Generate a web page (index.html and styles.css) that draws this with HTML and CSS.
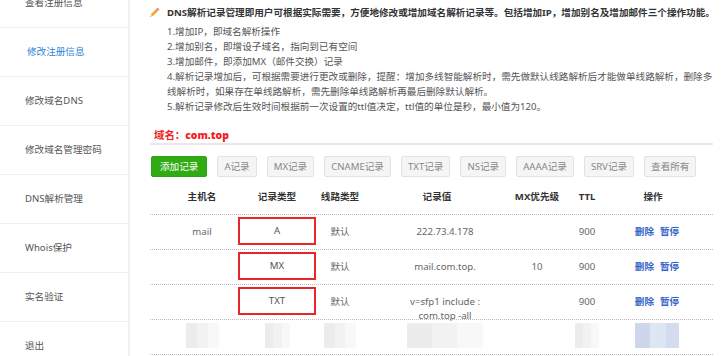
FILE: index.html
```html
<!DOCTYPE html>
<html lang="zh-CN">
<head>
    <meta charset="UTF-8">
    <meta name="viewport" content="width=device-width, initial-scale=1.0">
    <title>DNS解析管理</title>
    <link rel="stylesheet" href="styles.css">
</head>
<body>
    <div class="sidebar">
        <div class="side-item">查看注册信息</div>
        <div class="side-item active">修改注册信息</div>
        <div class="side-item">修改域名DNS</div>
        <div class="side-item">修改域名管理密码</div>
        <div class="side-item">DNS解析管理</div>
        <div class="side-item">Whois保护</div>
        <div class="side-item">实名验证</div>
        <div class="side-item">退出</div>
    </div>

    <div class="main">
        <div class="notice-title">
            <svg class="pencil" width="13" height="13" viewBox="0 0 16 16">
                <g transform="rotate(-45 8 8)">
                    <rect x="3" y="6.3" width="9.5" height="3.4" fill="#f2a12e"/>
                    <rect x="3" y="6.3" width="9.5" height="1.1" fill="#f7c05a"/>
                    <rect x="12.5" y="6.3" width="2.5" height="3.4" fill="#e98a8a"/>
                    <polygon points="3,6.3 3,9.7 0.4,8" fill="#f1d6a8"/>
                    <polygon points="1.3,7.4 1.3,8.6 0.4,8" fill="#444"/>
                </g>
            </svg>
            <span>DNS解析记录管理即用户可根据实际需要，方便地修改或增加域名解析记录等。包括增加IP，增加别名及增加邮件三个操作功能。</span>
        </div>
        <div class="notice-list">
            <p>1.增加IP，即域名解析操作</p>
            <p>2.增加别名，即增设子域名，指向到已有空间</p>
            <p>3.增加邮件，即添加MX（邮件交换）记录</p>
            <p>4.解析记录增加后，可根据需要进行更改或删除，提醒：增加多线智能解析时，需先做默认线路解析后才能做单线路解析，删除多线解析时，如果存在单线路解析，需先删除单线路解析再最后删除默认解析。</p>
            <p>5.解析记录修改后生效时间根据前一次设置的ttl值决定，ttl值的单位是秒，最小值为120。</p>
        </div>

        <div class="domain-title">域名：<b>com.top</b></div>

        <div class="toolbar">
            <button class="btn btn-add">添加记录</button>
            <button class="btn">A记录</button>
            <button class="btn">MX记录</button>
            <button class="btn">CNAME记录</button>
            <button class="btn">TXT记录</button>
            <button class="btn">NS记录</button>
            <button class="btn">AAAA记录</button>
            <button class="btn">SRV记录</button>
            <button class="btn">查看所有</button>
        </div>

        <div class="records">
            <div class="row head">
                <div class="c-host">主机名</div>
                <div>记录类型</div>
                <div>线路类型</div>
                <div>记录值</div>
                <div>MX优先级</div>
                <div>TTL</div>
                <div class="c-op">操作</div>
            </div>
            <div class="row">
                <div class="c-host">mail</div>
                <div class="c-type"><span class="mark">A</span></div>
                <div>默认</div>
                <div class="c-value">222.73.4.178</div>
                <div></div>
                <div>900</div>
                <div class="c-op"><a>删除</a><a>暂停</a></div>
            </div>
            <div class="row">
                <div class="c-host"></div>
                <div class="c-type"><span class="mark">MX</span></div>
                <div>默认</div>
                <div class="c-value">mail.com.top.</div>
                <div>10</div>
                <div>900</div>
                <div class="c-op"><a>删除</a><a>暂停</a></div>
            </div>
            <div class="row">
                <div class="c-host"></div>
                <div class="c-type"><span class="mark">TXT</span></div>
                <div>默认</div>
                <div class="c-value">v=sfp1 include :<br>com.top -all</div>
                <div></div>
                <div>900</div>
                <div class="c-op"><a>删除</a><a>暂停</a></div>
            </div>
            <div class="row blurred">
                <div class="c-host"><span class="blur" style="width:33px"></span></div>
                <div><span class="blur" style="width:25px"></span></div>
                <div><span class="blur" style="width:32px"></span></div>
                <div class="c-value"><span class="blur" style="width:76px"></span></div>
                <div></div>
                <div><span class="blur" style="width:24px"></span></div>
                <div class="c-op"><span class="blur blue" style="width:44px"></span></div>
            </div>
        </div>
    </div>
</body>
</html>
```

FILE: styles.css
```css
body {
    margin: 0;
    height: 356px;
    overflow: hidden;
    display: flex;
    background: #fff;
    font-family: "Noto Sans", "Noto Sans CJK SC", sans-serif;
    font-size: 9.6px;
    color: #555;
}
.sidebar {
    width: 128px;
    flex-shrink: 0;
    border-right: 2px solid #f1f1f1;
    margin-top: -21px;
    height: 377px;
}
.side-item {
    height: 48px;
    line-height: 48px;
    padding-left: 25px;
    border-bottom: 1px solid #f0f0f0;
    color: #555;
}
.side-item.active {
    color: #2d84d8;
    padding-left: 27px;
}
.main {
    padding-left: 20px;
    width: 563px;
}
.notice-title {
    display: flex;
    align-items: center;
    gap: 6px;
    margin: 4px 0 0 -2px;
    height: 16px;
    white-space: nowrap;
    font-weight: bold;
    color: #333;
}
.pencil {
    flex-shrink: 0;
}
.notice-list {
    margin-top: 4px;
    padding-left: 17px;
    width: 550px;
}
.notice-list p {
    margin: 0;
    line-height: 15px;
}
.domain-title {
    margin-top: 13px;
    padding-left: 4px;
    height: 16px;
    line-height: 16px;
    font-size: 10.4px;
    font-weight: bold;
    color: #f01e1e;
    border-bottom: 2px solid #e9e9e9;
}
.toolbar {
    display: flex;
    gap: 10px;
    margin: 11px 0 0 1px;
}
.btn {
    height: 21px;
    padding: 0 6px;
    border: 1px solid #e2e2e2;
    border-radius: 2px;
    background: #f5f5f5;
    color: #888;
    font-family: inherit;
    font-size: 9.6px;
    line-height: 19px;
}
.btn-add {
    padding: 0 8px;
    background: #31ab14;
    border-color: #2ea312;
    color: #fff;
}
.records {
    margin-top: 3px;
}
.row {
    display: grid;
    grid-template-columns: 88px 78px 48px 146px 54px 46px 103px;
    height: 34px;
    border-bottom: 1px dotted #bdbdbd;
    text-align: center;
    color: #666;
}
.row > div {
    padding-top: 10px;
    line-height: 14px;
    white-space: nowrap;
}
.row.head > div {
    padding-top: 0;
    line-height: 34px;
    font-weight: bold;
    color: #333;
}
.c-host {
    padding-left: 16px;
}
.c-value {
    padding-left: 16px;
}
.row > .c-type {
    padding-top: 2px;
}
.mark {
    display: block;
    box-sizing: border-box;
    width: 78px;
    height: 28px;
    line-height: 24px;
    border: 2px solid #e8262a;
    color: #555;
}
.c-op {
    padding-right: 9px;
}
.row.head .c-op {
    padding-right: 17px;
}
.c-op a {
    color: #3466c8;
    font-weight: bold;
    margin: 0 3px;
}
.row.blurred > div {
    padding-top: 3px;
}
.blur {
    display: inline-block;
    height: 25px;
    background: linear-gradient(90deg, #ececec 0 33%, #f2f2f2 33% 66%, #f8f8f8 66%);
}
.blur.blue {
    background: linear-gradient(90deg, #cdd7ec 0 35%, #dfe6f3 35% 70%, #d3ddef 70%);
}
```
